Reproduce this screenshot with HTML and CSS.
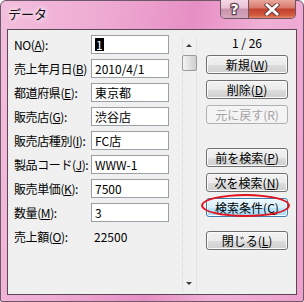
FILE: index.html
```html
<!DOCTYPE html>
<html lang="ja">
<head>
<meta charset="utf-8">
<link rel="stylesheet" href="styles.css">
</head>
<body>
<div class="window">
  <div class="titlebar">
    <div class="title">データ</div>
    <div class="caption">
      <div class="cbtn help"><span>?</span></div>
      <div class="cbtn close">
        <svg width="18" height="13" viewBox="0 0 18 13"><path d="M4 2 L14 11 M14 2 L4 11" stroke="#6a3b3b" stroke-width="4.6" stroke-linecap="square"/><path d="M4 2 L14 11 M14 2 L4 11" stroke="#ffffff" stroke-width="2.8" stroke-linecap="square"/></svg>
      </div>
    </div>
  </div>
  <div class="client">
    <div class="form">
      <div class="lbl">NO(<u>A</u>):</div><div class="field"><span class="sel">1</span></div>
      <div class="lbl">売上年月日(<u>B</u>)</div><div class="field">2010/4/1</div>
      <div class="lbl">都道府県(<u>E</u>):</div><div class="field">東京都</div>
      <div class="lbl">販売店(<u>G</u>):</div><div class="field">渋谷店</div>
      <div class="lbl">販売店種別(<u>I</u>):</div><div class="field">FC店</div>
      <div class="lbl">製品コード(<u>J</u>):</div><div class="field">WWW-1</div>
      <div class="lbl">販売単価(<u>K</u>):</div><div class="field">7500</div>
      <div class="lbl">数量(<u>M</u>):</div><div class="field">3</div>
      <div class="lbl">売上額(<u>O</u>):</div><div class="value">22500</div>
    </div>
    <div class="scroll">
      <div class="arrow up"></div>
      <div class="thumb"></div>
      <div class="track"></div>
      <div class="arrow down"></div>
    </div>
    <div class="buttons">
      <div class="count">1 / 26</div>
      <div class="group">
        <div class="btn">新規(<u>W</u>)</div>
        <div class="btn">削除(<u>D</u>)</div>
        <div class="btn disabled">元に戻す(R)</div>
      </div>
      <div class="group">
        <div class="btn">前を検索(<u>P</u>)</div>
        <div class="btn">次を検索(<u>N</u>)</div>
        <div class="btn hot">検索条件(<u>C</u>)</div>
      </div>
      <div class="group">
        <div class="btn">閉じる(<u>L</u>)</div>
      </div>
    </div>
    <div class="ring"></div>
  </div>
</div>
</body>
</html>
```
FILE: styles.css
```css
html, body {
  margin: 0;
  padding: 0;
}
body {
  width: 304px;
  height: 302px;
  overflow: hidden;
  font-family: "Noto Sans CJK JP", "Liberation Sans", sans-serif;
  font-size: 12px;
  color: #000;
}
.window {
  width: 304px;
  height: 302px;
  box-sizing: border-box;
  border: 1px solid #6d5868;
  border-radius: 6px 6px 2px 2px;
  background: linear-gradient(100deg, #f3bedd 0%, #eeaad2 30%, #e78fc4 55%, #f0b0d6 75%, #ee9fcd 100%);
  display: flex;
  flex-direction: column;
  padding: 0 6px 6px 6px;
}
.titlebar {
  height: 28px;
  display: flex;
  justify-content: space-between;
  align-items: flex-start;
}
.title {
  margin-top: 5px;
  padding-left: 1px;
  font-size: 13px;
  line-height: 16px;
  color: #111;
  text-shadow: 0 0 4px #fff, 0 0 6px #fff;
}
.caption {
  display: flex;
  margin-top: -1px;
  margin-right: 1px;
  border: 1px solid #6f5466;
  border-top: none;
  border-radius: 0 0 5px 5px;
  overflow: hidden;
}
.cbtn {
  height: 18px;
  display: flex;
  align-items: center;
  justify-content: center;
}
.help {
  width: 27px;
  border-right: 1px solid #6f5466;
  background: linear-gradient(#f4d6e6 0%, #e9c1d6 45%, #c892ad 50%, #d4a7bd 100%);
}
.help span {
  color: #fff;
  font-family: "DejaVu Sans", sans-serif;
  font-weight: bold;
  font-size: 14px;
  line-height: 18px;
  -webkit-text-stroke: 2.5px #5e4050;
  paint-order: stroke fill;
}
.close {
  width: 46px;
  background: linear-gradient(#e9a79c 0%, #d8786a 45%, #c0402c 50%, #d35a3f 85%, #e58a6a 100%);
}
.client {
  flex: 1;
  border: 1px solid #5a4655;
  background: #f0f0f0;
  display: flex;
  position: relative;
}
.form {
  padding: 5px 0 0 6px;
  display: grid;
  grid-template-columns: 77px 78px;
  grid-auto-rows: 19px;
  row-gap: 5px;
  align-content: start;
}
.lbl {
  display: flex;
  align-items: center;
  white-space: nowrap;
  line-height: 14px;
  letter-spacing: -0.4px;
}
.field {
  box-sizing: border-box;
  border: 1px solid #9a9fa6;
  background: #fff;
  padding: 0 3px;
  display: flex;
  align-items: center;
  line-height: 14px;
}
.sel {
  background: #000;
  color: #fff;
  padding: 0 1px;
  line-height: 13px;
}
.value {
  display: flex;
  align-items: center;
  padding-left: 3px;
}
.scroll {
  margin: 8px 0 3px 13px;
  width: 15px;
  display: flex;
  flex-direction: column;
  border-left: 1px dotted #d6d6d6;
  border-right: 1px dotted #d6d6d6;
  box-sizing: border-box;
}
.arrow {
  height: 17px;
  position: relative;
}
.arrow::after {
  content: "";
  position: absolute;
  left: 3px;
  border-left: 3px solid transparent;
  border-right: 3px solid transparent;
}
.up::after {
  top: 6px;
  border-bottom: 3px solid #3a3a3a;
}
.down::after {
  top: 8px;
  border-top: 3px solid #3a3a3a;
}
.thumb {
  height: 14px;
  margin: 0 -1px;
  border: 1px solid #9b9b9b;
  border-radius: 2px;
  background: linear-gradient(90deg, #f4f4f4, #dcdcdc 60%, #cfcfcf);
}
.track {
  flex: 1;
}
.buttons {
  margin-left: 9px;
  width: 82px;
  display: flex;
  flex-direction: column;
  padding-top: 6px;
}
.count {
  text-align: center;
  line-height: 14px;
  height: 14px;
  margin-bottom: 5px;
}
.group {
  display: flex;
  flex-direction: column;
  gap: 6px;
  margin-bottom: 24px;
}
.group + .group:last-child {
  margin-top: -10px;
}
.btn {
  height: 19px;
  box-sizing: border-box;
  border: 1px solid #707070;
  border-radius: 3px;
  background: linear-gradient(#f2f2f2 0%, #ebebeb 50%, #dddddd 51%, #cfcfcf 100%);
  box-shadow: inset 0 0 0 1px #fbfbfb;
  display: flex;
  align-items: center;
  justify-content: center;
  line-height: 14px;
  white-space: nowrap;
}
.btn.disabled {
  color: #a3a3a3;
  border-color: #adb2b5;
  background: #f4f4f4;
  box-shadow: none;
}
.btn.hot {
  border-color: #3c7fb1;
  background: linear-gradient(#eaf6fd 0%, #d9f0fc 50%, #bee6fd 51%, #a7d9f5 100%);
}
.ring {
  position: absolute;
  left: 193px;
  top: 164px;
  width: 89px;
  height: 23px;
  box-sizing: border-box;
  border: 2px solid #e0141e;
  border-radius: 50%;
}
```
